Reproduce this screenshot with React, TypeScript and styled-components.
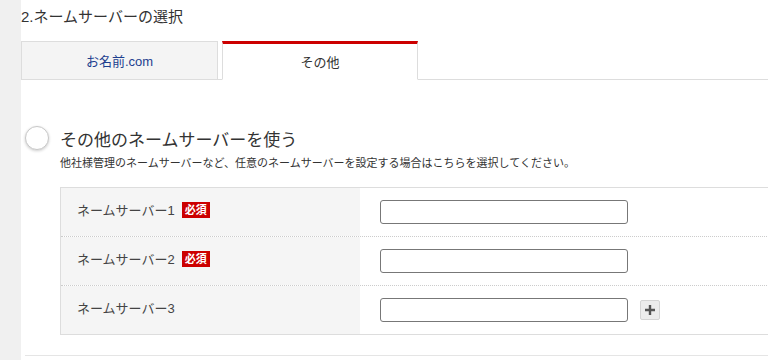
import React from 'react';
import styled, { createGlobalStyle } from 'styled-components';

const GlobalStyle = createGlobalStyle`
  html, body {
    margin: 0;
    padding: 0;
    background: #fff;
    font-family: "Liberation Sans", "Noto Sans CJK JP", sans-serif;
    color: #333;
  }
`;

type Row = {
  label: string,
  required: boolean,
  addable?: boolean,
}

const rows: Row[] = [
  { label: 'ネームサーバー1', required: true },
  { label: 'ネームサーバー2', required: true },
  { label: 'ネームサーバー3', required: false, addable: true },
];

const Page = styled.div`
  display: flex;
  width: 768px;
  height: 360px;
  overflow: hidden;
`;

const Sidebar = styled.div`
  width: 21px;
  flex-shrink: 0;
  background: #f0f0f0;
`;

const Main = styled.div`
  flex: 1;
  min-width: 0;
`;

const Title = styled.h2`
  margin: 0;
  padding-top: 5px;
  font-size: 15px;
  font-weight: normal;
  line-height: 24px;
  color: #333;
`;

const TabList = styled.div`
  display: flex;
  align-items: flex-end;
  gap: 4px;
  margin-top: 12px;
  border-bottom: 1px solid #ddd;
`;

const Tab = styled.div<{ $active?: boolean }>`
  box-sizing: border-box;
  width: ${p => (p.$active ? '196px' : '197px')};
  height: 39px;
  margin-bottom: -1px;
  display: flex;
  align-items: center;
  justify-content: center;
  font-size: 13px;
  border: 1px solid #ddd;
  border-top: ${p => (p.$active ? '3px solid #c00' : '1px solid #ddd')};
  border-bottom-color: ${p => (p.$active ? '#fff' : '#ddd')};
  background: ${p => (p.$active ? '#fff' : '#f4f4f4')};
  color: ${p => (p.$active ? '#333' : '#1d3f8f')};
`;

const Option = styled.div`
  display: flex;
  align-items: flex-start;
  margin-top: 48px;
  padding-left: 4px;
`;

const Radio = styled.span`
  box-sizing: border-box;
  width: 24px;
  height: 24px;
  flex-shrink: 0;
  border-radius: 50%;
  border: 1px solid #c8c8c8;
  background: #fff;
  box-shadow: 0 1px 3px rgba(0, 0, 0, 0.2);
  margin-top: -2px;
`;

const OptionText = styled.div`
  margin-left: 11px;
`;

const OptionTitle = styled.div`
  font-size: 17px;
  line-height: 26px;
  color: #333;
`;

const OptionNote = styled.div`
  font-size: 11px;
  line-height: 16px;
  color: #333;
  margin-top: 1px;
`;

const Table = styled.div`
  margin: 16px -20px 0 39px;
  border: 1px solid #ddd;
`;

const TableRow = styled.div`
  display: flex;
  height: 48px;

  & + & {
    border-top: 1px dotted #ccc;
  }
`;

const LabelCell = styled.div`
  width: 299px;
  flex-shrink: 0;
  display: flex;
  align-items: center;
  padding: 0 0 5px 16px;
  box-sizing: border-box;
  background: #f5f5f5;
  font-size: 13px;
  color: #444;
`;

const Badge = styled.span`
  margin-left: 7px;
  padding: 0 3px;
  height: 16px;
  line-height: 16px;
  background: #c00;
  color: #fff;
  font-size: 11px;
  font-weight: bold;
`;

const FieldCell = styled.div`
  flex: 1;
  display: flex;
  align-items: center;
  padding-left: 20px;
`;

const Input = styled.input`
  box-sizing: border-box;
  width: 248px;
  height: 24px;
  border: 1px solid #777;
  border-radius: 3px;
  background: #fff;
  margin: 0;
`;

const AddButton = styled.button`
  box-sizing: border-box;
  width: 20px;
  height: 20px;
  margin-left: 12px;
  padding: 0;
  display: flex;
  align-items: center;
  justify-content: center;
  border: 1px solid #d4d4d4;
  border-radius: 2px;
  background: #ececec;
`;

const Divider = styled.div`
  margin: 20px 0 0 4px;
  border-top: 1px solid #e5e5e5;
`;

const App = () => {
  const renderRows = rows.map((row, index) => {
    return (
      <TableRow key={index}>
        <LabelCell>
          {row.label}
          {row.required && <Badge>必須</Badge>}
        </LabelCell>
        <FieldCell>
          <Input type="text" />
          {row.addable && (
            <AddButton type="button" aria-label="追加">
              <svg width="12" height="12" viewBox="0 0 12 12">
                <path d="M6 1v10M1 6h10" stroke="#555" strokeWidth="2.4" />
              </svg>
            </AddButton>
          )}
        </FieldCell>
      </TableRow>
    )
  });

  return (
    <Page>
      <GlobalStyle />
      <Sidebar />
      <Main>
        <Title>2.ネームサーバーの選択</Title>
        <TabList>
          <Tab>お名前.com</Tab>
          <Tab $active>その他</Tab>
        </TabList>
        <Option>
          <Radio />
          <OptionText>
            <OptionTitle>その他のネームサーバーを使う</OptionTitle>
            <OptionNote>他社様管理のネームサーバーなど、任意のネームサーバーを設定する場合はこちらを選択してください。</OptionNote>
          </OptionText>
        </Option>
        <Table>
          {renderRows}
        </Table>
        <Divider />
      </Main>
    </Page>
  )
}

export default App;
